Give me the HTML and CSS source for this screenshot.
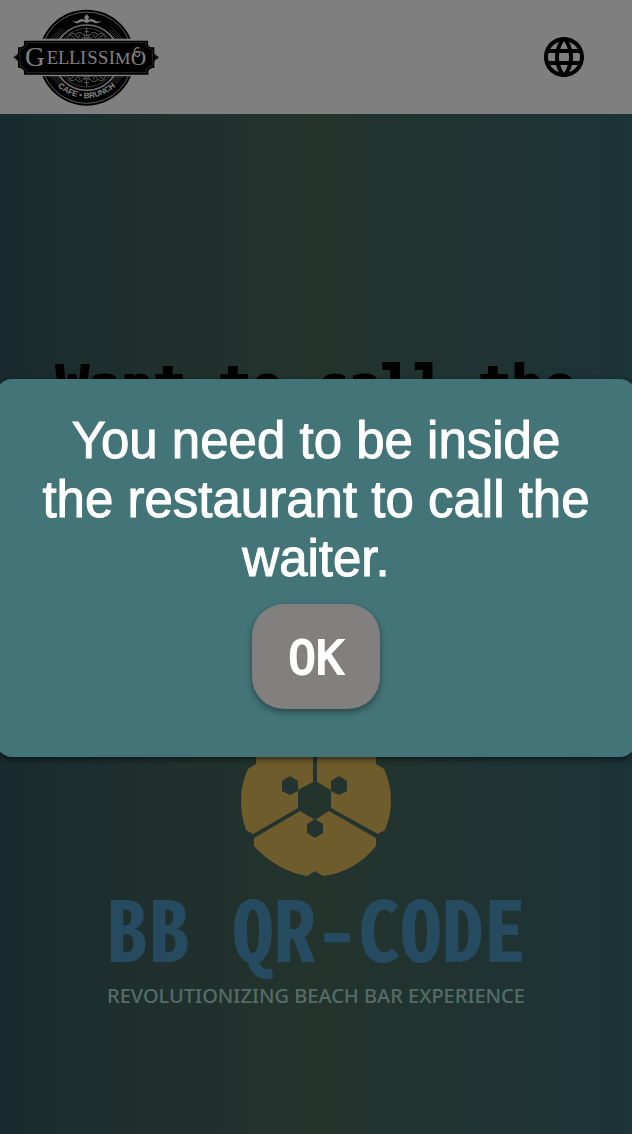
FILE: index.html
```html
<!DOCTYPE html>
<html lang="en">
<head>
<meta charset="utf-8">
<meta name="viewport" content="width=device-width, initial-scale=1">
<title>Gellissimo – Call the waiter</title>
<link rel="stylesheet" href="styles.css">
</head>
<body>
<div class="page">
  <header class="topbar">
    <a class="brand" href="#" aria-label="Gellissimo Cafe Brunch">
      <svg class="brand-logo" viewBox="36 27 444 300">
        <defs>
          <path id="ring-text" d="M160 252Q258 344 360 252"/>
          <g id="scroll" fill="none" stroke="#bbb" stroke-width="3" stroke-linecap="round">
            <path d="M260 86v26M253 99q7-8 14 0M250 107q10 7 20 0M245 117h30"/>
            <path d="M257 118q-10-23-25-16q-9 8 2 13q9-1 5-8M253 123q-24 7-34-10q-11-9-16 3q0 12 11 9q6-4 0-8M226 106q-10-8-19 0M205 126q15 7 27-3"/>
            <path d="M263 118q10-23 25-16q9 8-2 13q-9-1-5-8M267 123q24 7 34-10q11-9 16 3q0 12-11 9q-6-4 0-8M294 106q10-8 19 0M315 126q-15 7-27-3"/>
          </g>
        </defs>
        <circle cx="260" cy="176" r="144"/>
        <circle cx="260" cy="176" r="137" fill="none" stroke="#bbb" stroke-width="3"/>
        <g fill="none" stroke="#888" stroke-width="2">
          <path d="M150 120l36-34M156 120l34-29M163 120l30-24M170 120l26-18M370 120l-36-34M364 120l-34-29M357 120l-30-24M350 120l-26-18"/>
          <path d="M150 232l36 34M156 232l34 29M163 232l30 24M170 232l26 18M370 232l-36 34M364 232l-34 29M357 232l-30 24M350 232l-26 18"/>
        </g>
        <circle cx="260" cy="176" r="98" stroke="#ddd" stroke-width="5"/>
        <circle cx="260" cy="176" r="88" fill="none" stroke="#aaa" stroke-width="2"/>
        <path fill="#fff" d="M215 64q12 8 22-1q10-6 18 1l-2-11 7-7 7 7-2 11q8-7 18-1q10 9 22 1q-9 13-22 7q-11-7-18-1l-5 3-5-3q-7-6-18 1q-13 6-22-7z"/>
        <use href="#scroll"/>
        <use href="#scroll" transform="matrix(1 0 0 -1 0 348)"/>
        <path fill="#fff" d="M63 119H455V131Q458 142 470 141V211Q458 211 455 219V232H63V219Q60 211 48 211V141Q60 142 63 131z"/>
        <path d="M72 125H444V137Q448 146 463 145V164L477 175L463 186V206Q449 206 445 217V227H72V217Q68 206 54 206V186L40 175L54 164V145Q68 146 72 137z"/>
        <path fill="none" stroke="#777" stroke-width="2" d="M79 131H438V139Q443 149 457 151V200Q443 203 438 213V221H79V213Q74 203 60 200V151Q74 149 79 139zM51 168l-7 7 7 7M466 168l7 7-7 7"/>
        <g class="brand-name">
          <text x="75" y="202" font-size="82">G</text>
          <text x="140" y="195" font-size="56">E</text>
          <text x="174" y="195" font-size="56">L</text>
          <text x="207" y="195" font-size="56">L</text>
          <text x="240" y="195" font-size="56">I</text>
          <text x="262" y="195" font-size="56">S</text>
          <text x="294" y="195" font-size="56">S</text>
          <text x="326" y="195" font-size="56">I</text>
          <text x="345" y="195" font-size="52">M</text>
          <text x="392" y="199" font-size="64">O</text>
        </g>
        <path fill="none" stroke="#fff" stroke-width="4" d="M418 147q-14-5-15 12q0 15 12 13q8-5 2-13q-6-4-8 3"/>
        <text class="brand-sub"><textPath href="#ring-text" startOffset="50%">CAFE • BRUNCH</textPath></text>
      </svg>
    </a>
    <button class="language" type="button" aria-label="Change language">
      <svg viewBox="0 0 24 24"><path d="M11.99 2C6.47 2 2 6.48 2 12s4.47 10 9.99 10C17.52 22 22 17.52 22 12S17.52 2 11.99 2zm6.93 6h-2.95c-.32-1.25-.78-2.45-1.38-3.56 1.84.63 3.37 1.91 4.33 3.56zM12 4.04c.83 1.2 1.48 2.53 1.91 3.96h-3.82c.43-1.43 1.08-2.76 1.91-3.96zM4.26 14C4.1 13.36 4 12.69 4 12s.1-1.36.26-2h3.38c-.08.66-.14 1.32-.14 2s.06 1.34.14 2H4.26zm.82 2h2.95c.32 1.25.78 2.45 1.38 3.56-1.84-.63-3.37-1.9-4.33-3.56zm2.95-8H5.08c.96-1.66 2.49-2.93 4.33-3.56C8.81 5.55 8.35 6.75 8.03 8zM12 19.96c-.83-1.2-1.48-2.53-1.91-3.96h3.82c-.43 1.43-1.08 2.76-1.91 3.96zM14.34 14H9.66c-.09-.66-.16-1.32-.16-2s.07-1.35.16-2h4.68c.09.65.16 1.32.16 2s-.07 1.34-.16 2zm.25 5.56c.6-1.11 1.06-2.31 1.38-3.56h2.95c-.96 1.65-2.49 2.93-4.33 3.56zM16.36 14c.08-.66.14-1.32.14-2s-.06-1.34-.14-2h3.38c.16.64.26 1.31.26 2s-.1 1.36-.26 2h-3.38z"/></svg>
    </button>
  </header>
  <main class="content">
    <h1 class="title">Want to call the</h1>
    <div class="promo">
      <svg class="flower" viewBox="240 724 152 154" aria-hidden="true">
        <path d="M313 724V782L298 790V808L253 834L246 830Q241 816 241 800Q241 784 248 769L256 764V745Q278 724 307 724z"/>
        <path d="M317 724V782L331 790V808L378 834L385 830Q391 816 391 800Q391 784 384 769L376 764V745Q352 724 323 724z"/>
        <path d="M254 838L300 811L315 820L329 811L376 838V846Q355 872 323 876L315 871L307 876Q277 871 254 846z"/>
        <g class="flower-holes">
          <path d="M290 776l8 5v10l-8 4-8-4v-10zM339 776l8 5v10l-8 4-8-4v-10zM315 819l8 5v9l-8 5-8-5v-9z"/>
        </g>
      </svg>
      <p class="promo-name">BB QR-CODE</p>
      <p class="promo-tagline">REVOLUTIONIZING BEACH BAR EXPERIENCE</p>
    </div>
  </main>
</div>
<div class="backdrop">
  <div class="dialog" role="alertdialog" aria-modal="true" aria-labelledby="dialog-message">
    <p class="message" id="dialog-message">You need to be inside the restaurant to call the waiter.</p>
    <button class="ok" type="button">OK</button>
  </div>
</div>
</body>
</html>
```

FILE: styles.css
```css
* {
  box-sizing: border-box;
}

body {
  margin: 0;
  font-family: "Liberation Sans", Arial, sans-serif;
}

.page {
  display: flex;
  flex-direction: column;
  min-height: 100vh;
  background: linear-gradient(to right, #32565c, #48685a 49%, #38666e);
}

.topbar {
  display: flex;
  align-items: center;
  justify-content: space-between;
  height: 114px;
  padding: 0 44px 0 12px;
  background: #fff;
}

.brand {
  display: block;
  width: 148px;
  padding-top: 2px;
}

.brand-logo {
  display: block;
  width: 100%;
}

.brand-name {
  fill: #fff;
  font-family: "Liberation Serif", serif;
}

.brand-sub {
  fill: #fff;
  font-family: "Liberation Sans", sans-serif;
  font-size: 24px;
  font-weight: bold;
  text-anchor: middle;
}

.language {
  width: 48px;
  height: 48px;
  padding: 0;
  border: 0;
  background: none;
}

.language svg {
  display: block;
  width: 48px;
  height: 48px;
}

.content {
  display: flex;
  flex: 1;
  flex-direction: column;
  align-items: center;
  justify-content: space-between;
  padding: 240px 16px 124px;
}

.title {
  margin: 0;
  font: bold 54px/64px "DejaVu Sans Mono", monospace;
  text-align: center;
  -webkit-text-stroke: 2px #000;
}

.promo {
  display: flex;
  flex-direction: column;
  align-items: center;
}

.flower {
  width: 152px;
  fill: #deb858;
}

.flower-holes {
  fill: #466660;
}

.promo-name {
  margin: 4px 0 0;
  color: #4c96c0;
  font: bold 84px/88px "Noto Sans Mono CJK JP", Roboto, sans-serif;
  white-space: nowrap;
}

.promo-tagline {
  margin: 12px 0 0;
  color: #a8d8cc;
  font: 500 20px/28px "Noto Sans", sans-serif;
  white-space: nowrap;
}

.backdrop {
  position: fixed;
  inset: 0;
  display: flex;
  align-items: center;
  padding-top: 2px;
  background: rgba(0, 0, 0, 0.5);
}

.dialog {
  display: flex;
  flex: 1;
  flex-direction: column;
  align-items: center;
  gap: 16px;
  margin: 0 -4px;
  padding: 32px 36px 48px;
  border-radius: 16px;
  background: #437478;
  box-shadow: 0 2px 6px rgba(0, 0, 0, 0.6);
}

.message {
  margin: 0;
  color: #fff;
  font-size: 51px;
  line-height: 59px;
  text-align: center;
  -webkit-text-stroke: 1px #fff;
}

.ok {
  padding: 22px 36px 18px;
  border: 0;
  border-radius: 32px;
  background: #82807e;
  box-shadow: 0 3px 6px rgba(0, 0, 0, 0.4);
  color: #fff;
  font: 46px/65px "DejaVu Sans Mono", monospace;
  -webkit-text-stroke: 2px #fff;
}
```
